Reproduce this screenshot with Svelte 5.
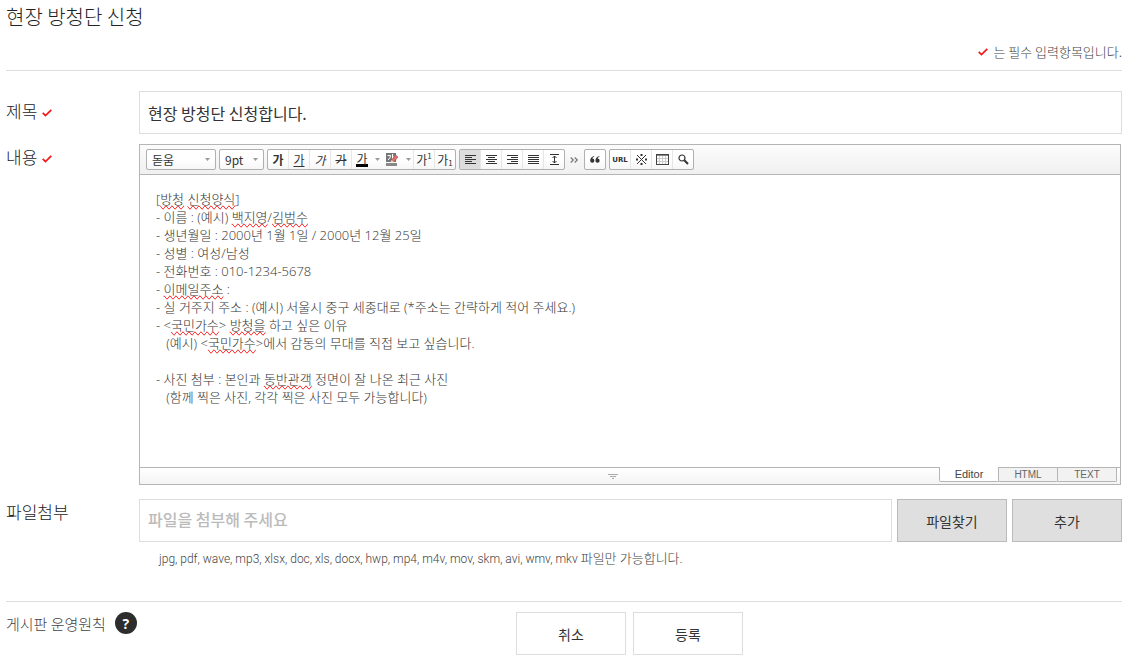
<script>
  let title = $state('현장 방청단 신청합니다.');
  let fileName = $state('');
  let font = $state('돋움');
  let size = $state('9pt');
  let align = $state('left');
  let mode = $state('Editor');

  const modes = ['Editor', 'HTML', 'TEXT'];

  // bars of the alignment icons, [x, width] from top to bottom
  const aligns = [
    { id: 'left', label: '왼쪽정렬', bars: [[0, 11], [0, 7], [0, 11], [0, 7], [0, 11]] },
    { id: 'center', label: '가운데정렬', bars: [[0, 11], [2, 7], [0, 11], [2, 7], [0, 11]] },
    { id: 'right', label: '오른쪽정렬', bars: [[0, 11], [4, 7], [0, 11], [4, 7], [0, 11]] },
    { id: 'justify', label: '양쪽정렬', bars: [[0, 11], [0, 11], [0, 11], [0, 11], [0, 11]] }
  ];

  // each line is a list of parts; sp marks a word the spell checker flags
  const lines = [
    [{ t: '[' }, { t: '방청', sp: true }, { t: ' ' }, { t: '신청양식', sp: true }, { t: ']' }],
    [{ t: '- 이름 : (예시) ' }, { t: '백지영', sp: true }, { t: '/' }, { t: '김범수', sp: true }],
    [{ t: '- 생년월일 : 2000년 1월 1일 / 2000년 12월 25일' }],
    [{ t: '- 성별 : 여성/남성' }],
    [{ t: '- 전화번호 : 010-1234-5678' }],
    [{ t: '- ' }, { t: '이메일주소', sp: true }, { t: ' :' }],
    [{ t: '- 실 거주지 주소 : (예시) 서울시 중구 세종대로 (*주소는 간략하게 적어 주세요.)' }],
    [{ t: '- <' }, { t: '국민가수', sp: true }, { t: '> ' }, { t: '방청을', sp: true }, { t: ' 하고 싶은 이유' }],
    [{ t: '   (예시) <' }, { t: '국민가수', sp: true }, { t: '>에서 감동의 무대를 직접 보고 싶습니다.' }],
    [],
    [{ t: '- 사진 첨부 : 본인과 ' }, { t: '동반관객', sp: true }, { t: ' 정면이 잘 나온 최근 사진' }],
    [{ t: '   (함께 찍은 사진, 각각 찍은 사진 모두 가능합니다)' }]
  ];
</script>

{#snippet check()}
  <svg class="check" width="10" height="8" viewBox="0 0 10 8" aria-label="필수">
    <path d="M.7 3.800 3.500 6.600 9.300 .9" fill="none" stroke="#f01818" stroke-width="1.7" />
  </svg>
{/snippet}

{#snippet caret()}
  <svg class="caret" width="5" height="3" viewBox="0 0 5 3" aria-hidden="true">
    <path d="M0 0H5L2.5 3Z" fill="#999" />
  </svg>
{/snippet}

<form class="page" onsubmit={(e) => e.preventDefault()}>
  <header>
    <h1>현장 방청단 신청</h1>
    <p class="notice">{@render check()} 는 필수 입력항목입니다.</p>
  </header>

  <div class="row">
    <label class="name" for="title">제목 {@render check()}</label>
    <input id="title" class="field" type="text" bind:value={title} />
  </div>

  <div class="row">
    <span class="name" id="body-label">내용 {@render check()}</span>
    <div class="editor">
      <div class="toolbar">
        <div class="pick pick-font">
          <select aria-label="글꼴" bind:value={font}>
            <option>돋움</option>
            <option>굴림</option>
            <option>바탕</option>
          </select>
          {@render caret()}
        </div>
        <div class="pick pick-size">
          <select aria-label="글자크기" bind:value={size}>
            <option>9pt</option>
            <option>10pt</option>
            <option>12pt</option>
          </select>
          {@render caret()}
        </div>

        <div class="group">
          <button type="button" title="굵게"><b>가</b></button>
          <button type="button" title="밑줄"><u>가</u></button>
          <button type="button" title="기울임꼴"><i>가</i></button>
          <button type="button" title="취소선"><s>가</s></button>
          <button type="button" title="글자색"><span class="color">가</span></button>
          <button type="button" class="more" title="글자색 더보기">{@render caret()}</button>
          <button type="button" class="joined" title="배경색">
            <svg width="13" height="13" viewBox="0 0 13 13">
              <rect width="10" height="9" fill="#777" />
              <path d="M1.5 2.5H4.5Q4.5 5 2 7M6.5 1V8M6.5 4H8" fill="none" stroke="#fff" />
              <path d="M5.500 7 9.500 2 12 4 8 9Z" fill="#d9706b" stroke="#a94844" stroke-width=".6" />
              <path d="M4.500 9.500 5.500 7 8 9Z" fill="#f3d9b8" />
              <rect y="10" width="11" height="3" fill="#888" />
            </svg>
          </button>
          <button type="button" class="more" title="배경색 더보기">{@render caret()}</button>
          <button type="button" title="위첨자">가<sup>1</sup></button>
          <button type="button" title="아래첨자">가<sub>1</sub></button>
        </div>

        <div class="group">
          {#each aligns as a (a.id)}
            <button type="button" title={a.label} class:on={align === a.id} onclick={() => (align = a.id)}>
              <svg width="11" height="11" viewBox="0 0 11 11" shape-rendering="crispEdges">
                {#each a.bars as [x, w], i}
                  <rect {x} y={i * 2 + 1} width={w} height="1" fill="#333" />
                {/each}
              </svg>
            </button>
          {/each}
          <button type="button" title="줄간격">
            <svg width="9" height="11" viewBox="0 0 9 11">
              <path d="M0 .5H9M0 10.500H9M4.500 2V9M2.500 4 4.500 2 6.500 4M2.500 7 4.500 9 6.500 7" fill="none" stroke="#333" />
            </svg>
          </button>
        </div>

        <button type="button" class="expand" title="더보기">
          <svg width="9" height="6" viewBox="0 0 9 6">
            <path d="M.7.500 3.300 3 .7 5.500M4.700.500 7.300 3 4.700 5.500" fill="none" stroke="#777" stroke-width="1.200" />
          </svg>
        </button>

        <div class="group">
          <button type="button" title="인용구">
            <svg width="10" height="7" viewBox="0 0 11 8" fill="#333">
              <path d="M4.500 0Q0 1.200 0 5.300A2.400 2.400 0 1 0 2.300 3Q2.600 1.500 4.500.8Z" />
              <path d="M10.500 0Q6 1.200 6 5.300A2.400 2.400 0 1 0 8.300 3Q8.600 1.500 10.500.8Z" />
            </svg>
          </button>
        </div>

        <div class="group">
          <button type="button" class="url" title="링크">URL</button>
          <button type="button" title="특수기호">
            <svg width="11" height="11" viewBox="0 0 11 11">
              <path d="M1 1 10 10M10 1 1 10" stroke="#333" />
              <path d="M4.500 0h2v2h-2zM4.500 9h2v2h-2zM0 4.500h2v2H0zM9 4.500h2v2H9z" fill="#333" />
            </svg>
          </button>
          <button type="button" title="표">
            <svg width="13" height="11" viewBox="0 0 13 11" shape-rendering="crispEdges">
              <path d="M1 4.500H12M1 7.500H12M3.500 2V10M6.500 2V10M9.500 2V10" stroke="#ccc" />
              <rect x=".5" y=".5" width="12" height="10" fill="none" stroke="#444" />
              <path d="M1 1.500H12" stroke="#888" />
            </svg>
          </button>
          <button type="button" title="찾기">
            <svg width="11" height="11" viewBox="0 0 11 11" fill="none" stroke="#333">
              <circle cx="4" cy="4" r="3" stroke-width="1.200" />
              <path d="M6.300 6.300 10 10" stroke-width="2" />
            </svg>
          </button>
        </div>
      </div>

      <div class="content" contenteditable="true" role="textbox" tabindex="0" aria-multiline="true" aria-labelledby="body-label" spellcheck="false">
        {#each lines as parts}
          <p>{#each parts as part}<span class:misspelt={part.sp}>{part.t}</span>{:else}<br />{/each}</p>
        {/each}
      </div>

      <div class="statusbar">
        <button type="button" class="grip" title="입력창 크기 조절">
          <svg width="10" height="5" viewBox="0 0 10 5" shape-rendering="crispEdges">
            <path d="M0 .5H10M2 2.500H8M4 4.500H6" stroke="#aaa" />
          </svg>
        </button>
        <div class="tabs">
          {#each modes as m}
            <button type="button" class:active={mode === m} onclick={() => (mode = m)}>{m}</button>
          {/each}
        </div>
      </div>
    </div>
  </div>

  <div class="row row-file">
    <label class="name" for="file">파일첨부</label>
    <div>
      <div class="file">
        <input id="file" class="field" type="text" placeholder="파일을 첨부해 주세요" bind:value={fileName} />
        <button type="button" class="btn btn-gray">파일찾기</button>
        <button type="button" class="btn btn-gray">추가</button>
      </div>
      <p class="hint">jpg, pdf, wave, mp3, xlsx, doc, xls, docx, hwp, mp4, m4v, mov, skm, avi, wmv, mkv <span>파일만 가능합니다.</span></p>
    </div>
  </div>

  <footer class="row">
    <a class="policy" href="#policy">
      게시판 운영원칙
      <span class="help">?</span>
    </a>
    <div class="actions">
      <button type="button" class="btn">취소</button>
      <button type="submit" class="btn">등록</button>
    </div>
  </footer>
</form>

<style>
  :global(body) {
    background: #fff;
  }

  .page {
    padding: 0 5px 2px 6px;
    font-family: 'Noto Sans CJK KR', sans-serif;
    color: #222;
  }

  .page * {
    box-sizing: border-box;
  }

  button,
  input,
  select {
    font-family: 'Noto Sans CJK KR', sans-serif;
    color: #333;
  }

  button {
    padding: 0;
    border: 0;
    background: none;
    cursor: pointer;
  }

  header {
    padding-top: 2px;
    margin-bottom: 20px;
    border-bottom: 1px solid #ddd;
  }

  h1 {
    margin: 0;
    font-size: 20px;
    font-weight: 300;
    line-height: 30px;
  }

  .notice {
    margin: 0;
    padding: 10px 0 8px;
    text-align: right;
    color: #444;
    font-size: 13px;
    font-weight: 300;
    line-height: 20px;
  }

  .notice .check {
    margin-right: 3px;
  }

  .check {
    vertical-align: 1px;
  }

  .row {
    display: grid;
    grid-template-columns: 133px minmax(0, 1fr);
    margin-bottom: 10px;
  }

  .name {
    padding-top: 8px;
    font-size: 17px;
    font-weight: 300;
    line-height: 24px;
  }

  .name .check {
    margin-left: 1px;
  }

  #body-label {
    padding-top: 1px;
  }

  .field {
    width: 100%;
    height: 43px;
    padding: 0 8px;
    border: 1px solid #ddd;
    font-size: 16px;
    outline: 0;
  }

  .field::placeholder {
    color: #bbb;
    font-weight: 500;
  }

  .editor {
    margin-right: 1px;
    border: 1px solid #b5b5b5;
  }

  .toolbar {
    display: flex;
    flex-wrap: wrap;
    align-items: center;
    gap: 3px;
    padding: 4px 6px;
    border-bottom: 1px solid #b5b5b5;
    background: linear-gradient(#fcfcfc, #f0f0f0);
  }

  .pick,
  .group {
    display: flex;
    height: 21px;
    border: 1px solid #b0b0b0;
    border-radius: 2px;
    background: linear-gradient(#fff 50%, #f6f6f6);
  }

  .pick {
    position: relative;
  }

  .pick-font {
    width: 70px;
  }

  .pick-size {
    width: 45px;
  }

  .pick select {
    width: 100%;
    padding: 0 0 0 5px;
    border: 0;
    background: none;
    appearance: none;
    font-size: 12px;
    line-height: 18px;
    outline: 0;
  }

  .pick .caret {
    position: absolute;
    right: 5px;
    top: 8px;
    pointer-events: none;
  }

  .group button {
    display: flex;
    align-items: center;
    justify-content: center;
    width: 21px;
    border-left: 1px solid #e6e6e6;
    font-size: 12px;
    line-height: 14px;
  }

  .group button:first-child {
    width: 20px;
  }

  .group button:first-child,
  .group .more,
  .group .joined {
    border-left: 0;
  }

  .group .more {
    width: 10px;
  }

  .group .on {
    background: #dcdcdc;
  }

  .group sup,
  .group sub {
    font-size: 8px;
    line-height: 8px;
  }

  .group sup {
    align-self: flex-start;
    margin-top: 2px;
  }

  .group sub {
    align-self: flex-end;
    margin-bottom: 2px;
  }

  .color {
    height: 14px;
    border-bottom: 3px solid #000;
    line-height: 11px;
  }

  .group .url {
    font-family: 'DejaVu Sans', sans-serif;
    font-size: 7px;
    font-weight: bold;
  }

  .expand {
    display: flex;
    align-items: center;
    justify-content: center;
    width: 13px;
    height: 21px;
  }

  .content {
    min-height: 292px;
    padding: 15px 16px;
    color: #333;
    font-family: 'Open Sans', 'Noto Sans CJK KR', sans-serif;
    font-size: 13px;
    font-weight: 300;
    line-height: 18px;
    white-space: pre-wrap;
    outline: 0;
  }

  .content p {
    height: 18px;
    margin: 0;
  }

  .misspelt {
    text-decoration-line: spelling-error;
  }

  .statusbar {
    display: flex;
    height: 17px;
    border-top: 1px solid #b5b5b5;
    background: linear-gradient(#fff, #f4f4f4);
  }

  .grip {
    flex: 1;
    display: flex;
    align-items: center;
    justify-content: center;
    padding-left: 146px;
    cursor: row-resize;
  }

  .tabs {
    display: flex;
    align-items: flex-start;
    padding-right: 3px;
  }

  .tabs button {
    width: 60px;
    height: 14px;
    margin-left: -1px;
    border: 1px solid #b5b5b5;
    border-top: 0;
    border-radius: 0 0 2px 2px;
    background: #f2f2f2;
    color: #666;
    font-family: 'Liberation Sans', sans-serif;
    font-size: 10px;
    line-height: 14px;
  }

  .tabs .active {
    height: 15px;
    margin-top: -1px;
    background: #fff;
    color: #444;
    font-size: 11px;
    line-height: 12px;
  }

  .row-file {
    margin: 14px 0 0;
    padding-bottom: 32px;
    border-bottom: 1px solid #ddd;
  }

  .row-file .name {
    padding-top: 1px;
  }

  .file {
    display: flex;
    gap: 5px;
  }

  .file .field {
    flex: 1;
    min-width: 0;
    padding-bottom: 4px;
  }

  .btn {
    flex: none;
    width: 110px;
    height: 43px;
    border: 1px solid #ddd;
    background: #fff;
    font-size: 14px;
  }

  .btn-gray {
    border-color: #bbb;
    background: #dfdfdf;
  }

  .hint {
    margin: 7px 0 0 20px;
    color: #444;
    font-family: Roboto, 'Noto Sans CJK KR', sans-serif;
    font-size: 12px;
    font-weight: 300;
    line-height: 20px;
  }

  .hint span {
    font-size: 13px;
  }

  footer.row {
    margin: 10px 0 0;
  }

  .policy {
    display: flex;
    align-items: center;
    gap: 9px;
    height: 22px;
    color: #444;
    font-size: 15px;
    font-weight: 300;
    white-space: nowrap;
    text-decoration: none;
  }

  .help {
    display: flex;
    align-items: center;
    justify-content: center;
    width: 22px;
    height: 22px;
    border-radius: 50%;
    background: #2d2d2d;
    color: #fff;
    font-family: 'Open Sans', sans-serif;
    font-size: 14px;
    font-weight: bold;
  }

  .actions {
    display: flex;
    justify-content: center;
    gap: 7px;
    padding-right: 2px;
  }
</style>
